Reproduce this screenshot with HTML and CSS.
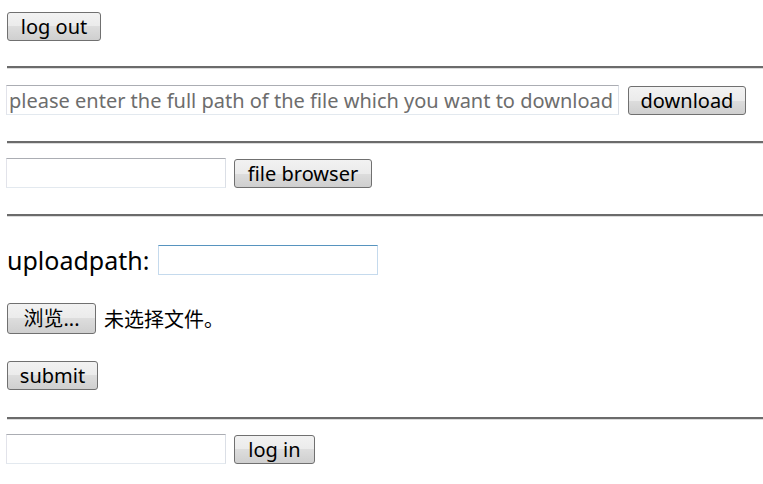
FILE: index.html
```html
<!DOCTYPE html>
<html>
<head>
<meta charset="utf-8">
<link rel="stylesheet" href="styles.css">
</head>
<body>
<div class="page">
  <div class="row row-logout">
    <button class="btn btn-logout">log out</button>
  </div>
  <hr class="rule">
  <div class="row row-download">
    <input class="field field-path" type="text" placeholder="please enter the full path of the file which you want to download">
    <button class="btn btn-download">download</button>
  </div>
  <hr class="rule">
  <div class="row row-browser">
    <input class="field field-short" type="text">
    <button class="btn btn-browser">file browser</button>
  </div>
  <hr class="rule">
  <div class="row row-upload">
    <span class="label">uploadpath:</span>
    <input class="field field-upload" type="text">
  </div>
  <div class="row row-file">
    <button class="btn btn-browse">浏览...</button>
    <span class="nofile">未选择文件。</span>
  </div>
  <div class="row row-submit">
    <button class="btn btn-submit">submit</button>
  </div>
  <hr class="rule">
  <div class="row row-login">
    <input class="field field-short" type="text">
    <button class="btn btn-login">log in</button>
  </div>
</div>
</body>
</html>
```

FILE: styles.css
```css
html, body {
  margin: 0;
  padding: 0;
  background: #ffffff;
}
body {
  font-family: "Noto Sans", "Noto Sans CJK SC", sans-serif;
  font-size: 20px;
  color: #000;
}
.page {
  padding-left: 6px;
  display: flex;
  flex-direction: column;
}
.row {
  display: flex;
  align-items: center;
  height: 30px;
}
.btn {
  font-family: "Noto Sans", "Noto Sans CJK SC", sans-serif;
  font-size: 20px;
  color: #000;
  height: 29px;
  margin: 0 0 0 1px;
  padding: 0;
  border: 1px solid #707070;
  border-radius: 3px;
  background: linear-gradient(#f2f2f2 0%, #ebebeb 50%, #dddddd 50%, #cfcfcf 100%);
  line-height: 25px;
  white-space: nowrap;
  box-sizing: border-box;
}
.field {
  font-family: "Noto Sans", sans-serif;
  font-size: 20px;
  height: 30px;
  box-sizing: border-box;
  margin: 0;
  padding: 0 2px;
  border: 1px solid #e3e9ef;
  border-top-color: #abadb3;
  border-left-color: #e2e3ea;
  border-right-color: #dbdfe6;
  background: #fff;
  outline: none;
}
.field::placeholder {
  color: #6d6d6d;
}
.rule {
  margin: 0 0 0 1px;
  height: 2px;
  border: none;
  border-bottom: 1px solid #dcdcdc;
  background: #6b6b6b;
  box-sizing: content-box;
  flex: none;
}
.row-logout { margin-top: 11px; margin-bottom: 25px; }
.btn-logout { width: 94px; }
.row-download { margin-top: 16px; margin-bottom: 26px; }
.field-path { width: 613px; }
.btn-download { width: 118px; margin-left: 9px; }
.row-browser { margin-top: 14px; margin-bottom: 26px; }
.field-short { width: 220px; }
.btn-browser { width: 138px; margin-left: 8px; }
.btn-login { width: 81px; margin-left: 8px; }
.row-upload { margin-top: 28px; }
.label { font-size: 25px; margin-left: 1px; line-height: 30px; }
.field-upload { width: 220px; margin-left: 9px; border-color: #c5daed; border-top-color: #5794bf; }
.row-file { margin-top: 28px; height: 31px; }
.btn-browse { width: 89px; height: 31px; }
.nofile { margin-left: 8px; font-family: "Noto Sans CJK SC", sans-serif; font-size: 20px; }
.row-submit { margin-top: 27px; margin-bottom: 27px; height: 29px; }
.btn-submit { width: 91px; }
.row-login { margin-top: 14px; }
```
